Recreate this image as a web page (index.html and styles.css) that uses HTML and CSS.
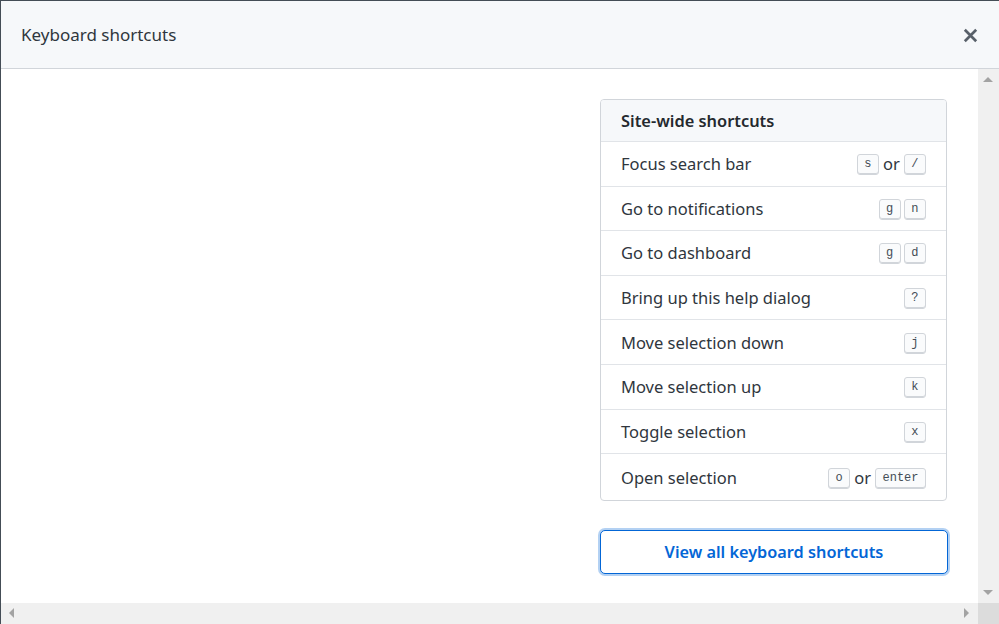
FILE: index.html
```html
<!DOCTYPE html>
<html lang="en">
<head>
<meta charset="utf-8">
<title>Keyboard shortcuts</title>
<link rel="stylesheet" href="styles.css">
</head>
<body>
<div class="dialog">
  <div class="dialog-header">
    <h1 class="dialog-title">Keyboard shortcuts</h1>
    <button class="close-btn" aria-label="Close">
      <svg width="15" height="15" viewBox="0 0 15 15" aria-hidden="true"><path d="M1.8 1.8 L13.2 13.2 M13.2 1.8 L1.8 13.2" stroke="#586069" stroke-width="2.7" stroke-linecap="butt" fill="none"/></svg>
    </button>
  </div>
  <div class="dialog-body">
    <div class="viewport">
      <div class="content">
        <div class="column">
          <div class="box">
            <div class="box-header">Site-wide shortcuts</div>
            <div class="row"><span>Focus search bar</span><span class="keys"><kbd>s</kbd><span class="or">or</span><kbd>/</kbd></span></div>
            <div class="row"><span>Go to notifications</span><span class="keys"><kbd>g</kbd><kbd>n</kbd></span></div>
            <div class="row"><span>Go to dashboard</span><span class="keys"><kbd>g</kbd><kbd>d</kbd></span></div>
            <div class="row"><span>Bring up this help dialog</span><span class="keys"><kbd>?</kbd></span></div>
            <div class="row"><span>Move selection down</span><span class="keys"><kbd>j</kbd></span></div>
            <div class="row"><span>Move selection up</span><span class="keys"><kbd>k</kbd></span></div>
            <div class="row"><span>Toggle selection</span><span class="keys"><kbd>x</kbd></span></div>
            <div class="row last"><span>Open selection</span><span class="keys"><kbd>o</kbd><span class="or">or</span><kbd>enter</kbd></span></div>
          </div>
          <button class="view-all">View all keyboard shortcuts</button>
        </div>
      </div>
      <div class="vscroll">
        <span class="arrow up"></span>
        <span class="arrow down"></span>
      </div>
    </div>
    <div class="hbar">
      <div class="hscroll">
        <span class="arrow left"></span>
        <span class="arrow right"></span>
      </div>
      <div class="corner"></div>
    </div>
  </div>
</div>
</body>
</html>
```

FILE: styles.css
```css
* { box-sizing: border-box; }
html, body {
  margin: 0;
  padding: 0;
  width: 999px;
  height: 624px;
  overflow: hidden;
  background: #fff;
}
body {
  font-family: "Noto Sans", "Open Sans", sans-serif;
  color: #24292e;
}
.dialog {
  width: 999px;
  height: 624px;
  border-top: 1px solid #444d56;
  border-left: 1px solid #444d56;
  display: flex;
  flex-direction: column;
}
.dialog-header {
  height: 68px;
  flex: none;
  background: #f6f8fa;
  border-bottom: 1px solid #d1d5da;
  display: flex;
  align-items: center;
  justify-content: space-between;
  padding: 0 21px 0 20px;
}
.dialog-title {
  margin: 0;
  font-size: 17px;
  font-weight: 400;
  color: #2f363d;
}
.close-btn {
  border: 0;
  background: transparent;
  padding: 0;
  width: 15px;
  height: 15px;
  display: flex;
  margin-top: 1px;
}
.dialog-body {
  flex: 1;
  display: flex;
  flex-direction: column;
  min-height: 0;
}
.viewport {
  flex: 1;
  display: flex;
  min-height: 0;
}
.content {
  flex: 1;
  display: flex;
  justify-content: flex-end;
  padding: 30px 31px 0 0;
}
.column {
  width: 347px;
  display: flex;
  flex-direction: column;
}
.box {
  border: 1px solid #d1d5da;
  border-radius: 4px;
  overflow: hidden;
}
.box-header {
  height: 42px;
  background: #f6f8fa;
  border-bottom: 1px solid #e1e4e8;
  display: flex;
  align-items: center;
  padding: 0 20px;
  font-size: 16.4px;
  font-weight: 600;
  color: #24292e;
}
.row {
  height: 44.6px;
  display: flex;
  align-items: center;
  justify-content: space-between;
  padding: 0 20px;
  font-size: 16.5px;
  border-bottom: 1px solid #e1e4e8;
  color: #2f363d;
}
.row.last {
  border-bottom: 0;
  height: 46px;
}
.keys {
  display: flex;
  align-items: center;
  gap: 3px;
}
.or {
  font-size: 16.5px;
  margin: 0 1px;
}
kbd {
  display: inline-block;
  height: 21px;
  line-height: 19px;
  padding: 0 6.5px;
  font-family: "Liberation Mono", monospace;
  font-size: 12px;
  color: #444d56;
  background: #fafbfc;
  border: 1px solid #d1d5da;
  border-radius: 3px;
  box-shadow: inset 0 -1px 0 #d1d5da;
  margin-top: 2px;
}
.view-all {
  margin-top: 29px;
  height: 44px;
  width: 348px;
  background: #fff;
  border: 1px solid #0366d6;
  border-radius: 5px;
  box-shadow: 0 0 0 2px rgba(3, 102, 214, 0.3);
  color: #0366d6;
  font-family: "Noto Sans", "Open Sans", sans-serif;
  font-size: 16.3px;
  font-weight: 600;
  padding: 0;
}
.vscroll {
  width: 21px;
  flex: none;
  background: #f0f0f0;
  position: relative;
}
.hbar {
  height: 21px;
  flex: none;
  display: flex;
}
.hscroll {
  flex: 1;
  background: #f0f0f0;
  position: relative;
}
.corner {
  width: 21px;
  background: #dcdcdc;
}
.arrow {
  position: absolute;
  width: 0;
  height: 0;
}
.arrow.up {
  top: 8px;
  left: 5px;
  border-left: 5px solid transparent;
  border-right: 5px solid transparent;
  border-bottom: 5px solid #a3a3a3;
}
.arrow.down {
  bottom: 8px;
  left: 5px;
  border-left: 5px solid transparent;
  border-right: 5px solid transparent;
  border-top: 5px solid #a3a3a3;
}
.arrow.left {
  top: 5px;
  left: 8px;
  border-top: 5px solid transparent;
  border-bottom: 5px solid transparent;
  border-right: 5px solid #a3a3a3;
}
.arrow.right {
  top: 5px;
  right: 9px;
  border-top: 5px solid transparent;
  border-bottom: 5px solid transparent;
  border-left: 5px solid #a3a3a3;
}
```
